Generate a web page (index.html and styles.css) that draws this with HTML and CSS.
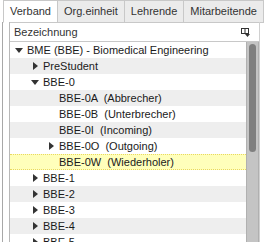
FILE: index.html
```html
<!DOCTYPE html>
<html lang="de">
<head>
  <meta charset="UTF-8" />
  <title>Verband</title>
  <link rel="stylesheet" href="styles.css">
</head>
<body>
  <div class="tabbox">
    <div class="tabs">
      <div class="tab active">Verband</div>
      <div class="tab">Org.einheit</div>
      <div class="tab">Lehrende</div>
      <div class="tab">Mitarbeitende</div>
    </div>

    <div class="panel">
      <div class="tree">
        <div class="tree-head">
          <span class="col-label">Bezeichnung</span>
          <svg class="col-picker" width="9" height="9" viewBox="0 0 9 9">
            <rect x="0.5" y="0.5" width="7" height="5" fill="none" stroke="#333" />
            <line x1="4" y1="0.5" x2="4" y2="5.5" stroke="#333" />
            <polygon points="4,6 9,6 6.5,9" fill="#333" />
          </svg>
        </div>

        <div class="tree-body">
          <div class="rows">
            <div class="row"><span class="twisty open"></span><span class="label">BME (BBE) - Biomedical Engineering</span></div>
            <div class="row odd lvl1"><span class="twisty closed"></span><span class="label">PreStudent</span></div>
            <div class="row lvl1"><span class="twisty open"></span><span class="label">BBE-0</span></div>
            <div class="row odd lvl2"><span class="twisty"></span><span class="label">BBE-0A  (Abbrecher)</span></div>
            <div class="row lvl2"><span class="twisty"></span><span class="label">BBE-0B  (Unterbrecher)</span></div>
            <div class="row odd lvl2"><span class="twisty"></span><span class="label">BBE-0I  (Incoming)</span></div>
            <div class="row lvl2 sub"><span class="twisty closed"></span><span class="label">BBE-0O  (Outgoing)</span></div>
            <div class="row lvl2 selected"><span class="twisty"></span><span class="label">BBE-0W  (Wiederholer)</span></div>
            <div class="row lvl1"><span class="twisty closed"></span><span class="label">BBE-1</span></div>
            <div class="row odd lvl1"><span class="twisty closed"></span><span class="label">BBE-2</span></div>
            <div class="row lvl1"><span class="twisty closed"></span><span class="label">BBE-3</span></div>
            <div class="row odd lvl1"><span class="twisty closed"></span><span class="label">BBE-4</span></div>
            <div class="row lvl1"><span class="twisty closed"></span><span class="label">BBE-5</span></div>
          </div>
          <div class="scrollbar"><div class="thumb"></div></div>
        </div>
      </div>
    </div>
  </div>
</body>
</html>
```

FILE: styles.css
```css
* {
  box-sizing: border-box;
}

body {
  margin: 0;
  width: 265px;
  height: 242px;
  overflow: hidden;
  background: #ffffff;
  font-family: "Liberation Sans", Arial, sans-serif;
  font-size: 11px;
  color: #1a1a1a;
}

.tabbox {
  padding-left: 2px;
  height: 100%;
  display: flex;
  flex-direction: column;
}

.tabs {
  display: flex;
  height: 23px;
  padding-left: 1px;
}

.tab {
  height: 23px;
  line-height: 21px;
  padding: 0 6px;
  border: 1px solid #c8c8c8;
  border-left: none;
  background: #ebebeb;
  color: #333;
  white-space: nowrap;
}

.tab:first-child {
  border-left: 1px solid #c8c8c8;
}

.tab.active {
  background: #ffffff;
  border-bottom-color: #ffffff;
}

.panel {
  flex: 1;
  border-left: 1px solid #a8a8a8;
  padding: 0 5px 0 6px;
  margin-top: -1px;
}

.tree {
  height: 100%;
  border-left: 1px solid #b8b8b8;
  border-right: 1px solid #d0d0d0;
  display: flex;
  flex-direction: column;
}

.tree-head {
  height: 20px;
  border-top: 1px solid #c8c8c8;
  border-bottom: 1px solid #c8c8c8;
  display: flex;
  align-items: center;
  justify-content: space-between;
  padding: 0 9px 0 4px;
  color: #333;
}

.col-picker {
  display: block;
}

.tree-body {
  flex: 1;
  display: flex;
}

.rows {
  flex: 1;
}

.row {
  height: 16px;
  display: flex;
  align-items: center;
  padding-left: 5px;
  white-space: pre;
}

.row.odd {
  background: #eeeeee;
}

.row.selected {
  background: #ffffbb;
  border-top: 1px dotted #e8d860;
  border-bottom: 1px dotted #e8d860;
}

.lvl1 {
  padding-left: 21px;
}

.lvl2 {
  padding-left: 37px;
}

.twisty {
  width: 12px;
  height: 16px;
  flex: none;
  position: relative;
}

.twisty.open::before {
  content: "";
  position: absolute;
  left: 0;
  top: 6px;
  border-left: 4px solid transparent;
  border-right: 4px solid transparent;
  border-top: 5px solid #333;
}

.twisty.closed::before {
  content: "";
  position: absolute;
  left: 2px;
  top: 4px;
  border-top: 4px solid transparent;
  border-bottom: 4px solid transparent;
  border-left: 5px solid #333;
}

.scrollbar {
  width: 13px;
  background: #c4c4c4;
  border-left: 1px solid #b0b0b0;
  border-right: 1px solid #b0b0b0;
  padding: 2px 2px 0 2px;
}

.thumb {
  height: 108px;
  background: #7f7f7f;
  border-radius: 4px 4px 4px 4px;
}
```
